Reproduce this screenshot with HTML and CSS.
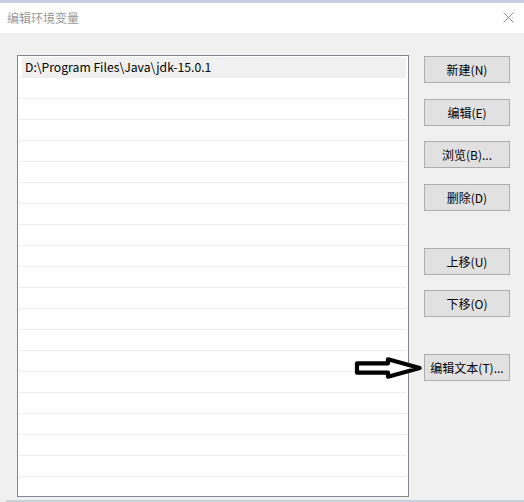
FILE: index.html
```html
<!DOCTYPE html>
<html lang="zh-CN">
<head>
<meta charset="utf-8">
<title>编辑环境变量</title>
<link rel="stylesheet" href="styles.css">
</head>
<body>
<div class="window">
  <div class="titlebar">
    <span class="title">编辑环境变量</span>
    <svg class="close" width="11" height="11" viewBox="0 0 11 11"><path d="M0.5 0.5 L10.5 10.5 M10.5 0.5 L0.5 10.5" stroke="#8a8a8a" stroke-width="1" fill="none"/></svg>
  </div>
  <div class="content">
    <div class="listbox">
      <div class="row sel"><div class="cell">D:\Program Files\Java\jdk-15.0.1</div></div>
      <div class="row"><div class="cell"></div></div>
      <div class="row"><div class="cell"></div></div>
      <div class="row"><div class="cell"></div></div>
      <div class="row"><div class="cell"></div></div>
      <div class="row"><div class="cell"></div></div>
      <div class="row"><div class="cell"></div></div>
      <div class="row"><div class="cell"></div></div>
      <div class="row"><div class="cell"></div></div>
      <div class="row"><div class="cell"></div></div>
      <div class="row"><div class="cell"></div></div>
      <div class="row"><div class="cell"></div></div>
      <div class="row"><div class="cell"></div></div>
      <div class="row"><div class="cell"></div></div>
      <div class="row"><div class="cell"></div></div>
      <div class="row"><div class="cell"></div></div>
      <div class="row"><div class="cell"></div></div>
      <div class="row"><div class="cell"></div></div>
      <div class="row"><div class="cell"></div></div>
      <div class="row"><div class="cell"></div></div>
      <div class="row"><div class="cell"></div></div>
    </div>
    <div class="buttons">
      <button class="btn b-new">新建(N)</button>
      <button class="btn b-edit">编辑(E)</button>
      <button class="btn b-browse">浏览(B)...</button>
      <button class="btn b-del">删除(D)</button>
      <button class="btn b-up">上移(U)</button>
      <button class="btn b-down">下移(O)</button>
      <button class="btn b-text">编辑文本(T)...</button>
    </div>
  </div>
  <div class="bottomedge"></div>
  <svg class="arrow" width="72" height="28" viewBox="0 0 72 28"><path d="M4 9.3 H35 V5.3 L66.7 14 L35 22.7 V18.7 H4 Z" fill="#ffffff" stroke="#000000" stroke-width="4.2" stroke-linejoin="round"/></svg>
</div>
</body>
</html>
```

FILE: styles.css
```css
* { box-sizing: border-box; }
html, body {
  margin: 0;
  padding: 0;
  width: 524px;
  height: 502px;
  overflow: hidden;
  background: #f0f0f0;
  font-family: "Noto Sans CJK SC", "Microsoft YaHei", "Noto Sans", sans-serif;
  font-size: 12px;
  color: #000;
}
.window {
  position: relative;
  width: 524px;
  height: 502px;
  border-top: 3px solid #c5cee0;
  background: #f0f0f0;
}
.titlebar {
  height: 30px;
  background: #ffffff;
  display: flex;
  align-items: center;
  justify-content: space-between;
  padding: 0 10px 0 7px;
}
.title {
  color: #999999;
  font-size: 12px;
  line-height: 16px;
}
.close { display: block; margin-top: -1px; }
.content {
  height: 467px;
  display: flex;
  align-items: flex-start;
  padding: 22px 0 0 17px;
}
.listbox {
  width: 392px;
  height: 442px;
  border: 1px solid #828790;
  background: #ffffff;
  padding-top: 1px;
  overflow: hidden;
  flex: none;
}
.row {
  height: 21px;
  margin: 0 2px 0 1px;
  border-bottom: 1px solid #ececec;
}
.cell {
  height: 20px;
  margin-left: 3px;
  padding-left: 3px;
  line-height: 20px;
  white-space: nowrap;
  font-size: 12.2px;
}
.row.sel { border-bottom-color: #f2f2f2; }
.row.sel .cell { background: #f0f0f0; height: 21px; line-height: 21px; }
.buttons {
  display: flex;
  flex-direction: column;
  margin-left: 15px;
  padding-top: 1px;
}
.btn {
  width: 86px;
  height: 27px;
  margin: 0;
  padding: 0;
  border: 1px solid #adadad;
  background: #e1e1e1;
  font-family: inherit;
  font-size: 12px;
  line-height: 16px;
  color: #000;
  text-align: center;
}
.b-edit { margin-top: 16px; }
.b-browse { margin-top: 15px; }
.b-del { margin-top: 16px; }
.b-up { margin-top: 37px; }
.b-down { margin-top: 15px; }
.b-text { margin-top: 37px; }
.bottomedge {
  height: 2px;
  margin-left: 6px;
  background: #c8d0dc;
}
.arrow {
  position: absolute;
  left: 353px;
  top: 351px;
}
```
